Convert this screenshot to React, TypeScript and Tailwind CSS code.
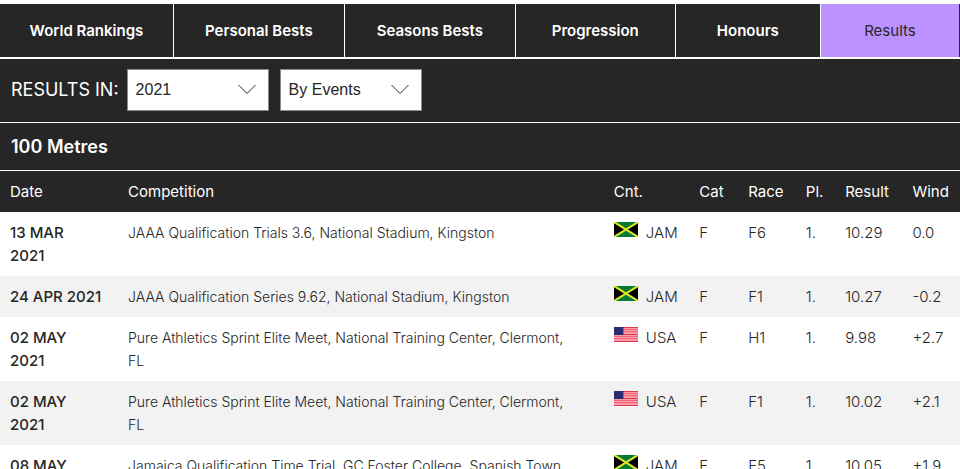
import { useState } from "react";
import type { ReactNode } from "react";

type Country = "JAM" | "USA";

interface ResultRow {
  day: string;
  year: string;
  wraps: boolean;
  competition: string;
  country: Country;
  race: string;
  place: string;
  result: string;
  wind: string;
}

const tabs = [
  { label: "World Rankings", size: "grow-[174]" },
  { label: "Personal Bests", size: "grow-[171]" },
  { label: "Seasons Bests", size: "grow-[171]" },
  { label: "Progression", size: "grow-[160]" },
  { label: "Honours", size: "grow-[145]" },
  { label: "Results", size: "grow-[139]" },
];

const rows: ResultRow[] = [
  { day: "13 MAR", year: "2021", wraps: true, competition: "JAAA Qualification Trials 3.6, National Stadium, Kingston", country: "JAM", race: "F6", place: "1.", result: "10.29", wind: "0.0" },
  { day: "24 APR", year: "2021", wraps: false, competition: "JAAA Qualification Series 9.62, National Stadium, Kingston", country: "JAM", race: "F1", place: "1.", result: "10.27", wind: "-0.2" },
  { day: "02 MAY", year: "2021", wraps: true, competition: "Pure Athletics Sprint Elite Meet, National Training Center, Clermont, FL", country: "USA", race: "H1", place: "1.", result: "9.98", wind: "+2.7" },
  { day: "02 MAY", year: "2021", wraps: true, competition: "Pure Athletics Sprint Elite Meet, National Training Center, Clermont, FL", country: "USA", race: "F1", place: "1.", result: "10.02", wind: "+2.1" },
  { day: "08 MAY", year: "2021", wraps: true, competition: "Jamaica Qualification Time Trial, GC Foster College, Spanish Town", country: "JAM", race: "F5", place: "1.", result: "10.05", wind: "+1.9" },
];

const columns = [
  { label: "Date", width: "w-[12.3%]" },
  { label: "Competition", width: "w-[50.6%]" },
  { label: "Cnt.", width: "w-[8.9%]" },
  { label: "Cat", width: "w-[5.1%]" },
  { label: "Race", width: "w-[6%]" },
  { label: "Pl.", width: "w-[4.1%]" },
  { label: "Result", width: "w-[7%]" },
  { label: "Wind", width: "w-[6%]" },
];

function JamaicaFlag() {
  return (
    <svg viewBox="0 0 23 15" className="h-[15px] w-6 shrink-0" preserveAspectRatio="none" aria-hidden="true">
      <rect width="23" height="15" fill="#067a33" />
      <path d="M0 0 11.5 7.5 0 15ZM23 0 11.5 7.5 23 15Z" fill="#000" />
      <path d="M0 0 23 15M23 0 0 15" stroke="#dfe62a" strokeWidth="2" />
    </svg>
  );
}

function UsaFlag() {
  return (
    <svg viewBox="0 0 23 15" className="h-[15px] w-6 shrink-0" preserveAspectRatio="none" aria-hidden="true">
      <rect width="23" height="15" fill="#fb9aa6" />
      <path d="M0 .5H23M0 7.5H23M0 14.5H23" stroke="#dc3a50" strokeWidth="1" />
      <path d="M0 2.5H23M0 4.5H23M0 9.5H23M0 11.5H23" stroke="#ef6678" strokeWidth="1" />
      <rect width="9" height="8" fill="#2c2a70" />
    </svg>
  );
}

function Picker({ label, options }: { label: string; options: string[] }) {
  return (
    <div className="relative w-[142px]">
      <select
        aria-label={label}
        className="block h-[42px] w-full appearance-none border border-[#8a8a8a] bg-white pl-2 pr-10 font-['Liberation_Sans',Arial,sans-serif] text-base text-[#262626]"
      >
        {options.map((option) => (
          <option key={option}>{option}</option>
        ))}
      </select>
      <svg viewBox="0 0 20 12" className="pointer-events-none absolute right-3 top-[15px] h-3 w-5" fill="none" stroke="#262626" strokeWidth="1" aria-hidden="true">
        <path d="M1.5 1 10 9.5 18.5 1" />
      </svg>
    </div>
  );
}

function Cell({ children }: { children: ReactNode }) {
  return <td className="py-[9px] pl-2.5 align-top">{children}</td>;
}

export default function App() {
  const [active, setActive] = useState("Results");

  return (
    <div className="overflow-hidden bg-white pt-1 font-['Inter','Liberation_Sans',sans-serif] text-[#262626]">
      <nav className="flex h-[53px] bg-[#262626]">
        {tabs.map(({ label, size }) => (
          <button
            key={label}
            type="button"
            onClick={() => setActive(label)}
            className={`${size} basis-0 border-r border-white pt-0.5 text-[15px] last:border-[#262626] ${
              active === label ? "bg-[#bb92ff] font-normal text-[#262626]" : "font-semibold text-white"
            }`}
          >
            {label}
          </button>
        ))}
      </nav>

      <div className="mt-0.5 flex h-[63px] items-center gap-2 bg-[#262626] pb-0.5 pl-[11px] text-white">
        <span className="text-lg">RESULTS IN:</span>
        <div className="flex gap-[11px]">
          <Picker label="Year" options={["2021", "2020", "2019"]} />
          <Picker label="Grouping" options={["By Events", "By Date"]} />
        </div>
      </div>

      <h2 className="mt-px flex h-[47px] items-center bg-[#262626] pl-[11px] text-lg font-semibold text-white">
        100 Metres
      </h2>

      <table className="mt-px w-full table-fixed border-collapse text-left text-[15px] leading-[23px]">
        <thead className="bg-[#262626] text-white">
          <tr>
            {columns.map(({ label, width }) => (
              <th key={label} scope="col" className={`${width} whitespace-nowrap py-[9px] pl-2.5 font-normal`}>
                {label}
              </th>
            ))}
          </tr>
        </thead>
        <tbody className="font-light">
          {rows.map((row, index) => (
            <tr key={index} className="even:bg-[#f2f2f2]">
              <td className="whitespace-nowrap py-[9px] pl-2.5 align-top font-medium">
                {row.day}
                {row.wraps ? <br /> : " "}
                {row.year}
              </td>
              <td className="py-[9px] pl-2.5 pr-8 align-top text-[14px] leading-[23px]">{row.competition}</td>
              <Cell>
                <span className="flex gap-2 pt-px leading-[21px]">
                  {row.country === "JAM" ? <JamaicaFlag /> : <UsaFlag />}
                  {row.country}
                </span>
              </Cell>
              <Cell>F</Cell>
              <Cell>{row.race}</Cell>
              <Cell>{row.place}</Cell>
              <Cell>{row.result}</Cell>
              <Cell>{row.wind}</Cell>
            </tr>
          ))}
        </tbody>
      </table>
    </div>
  );
}
